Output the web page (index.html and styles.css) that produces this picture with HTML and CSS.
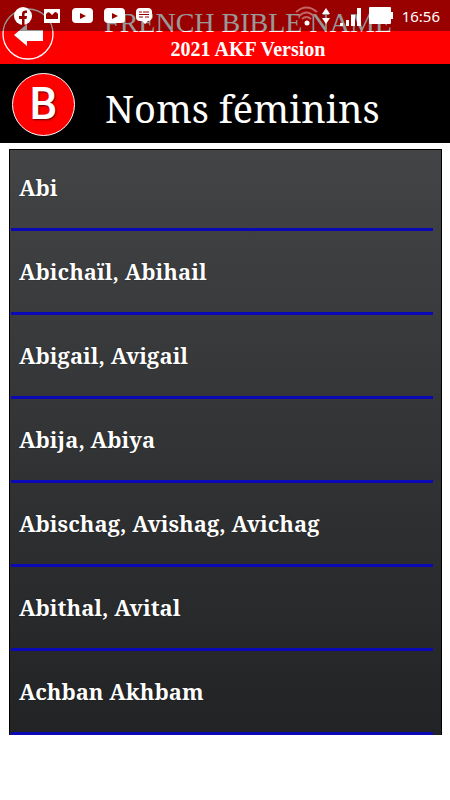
FILE: index.html
```
<!DOCTYPE html>
<html lang="fr">
<head>
<meta charset="utf-8">
<meta name="viewport" content="width=device-width, initial-scale=1">
<title>French Bible Name</title>
<link rel="stylesheet" href="styles.css">
</head>
<body>
<div class="status">
  <div class="status-group notices">
    <svg width="18" height="18" viewBox="0 0 18 18" aria-hidden="true"><circle cx="9" cy="9" r="9" fill="#fff"/><path d="M8 18v-6H5V9h3V7c0-3 2-4 5-3.500v2.500c-2 0-2.500 0-2.500 1.500V9H13l-.5 3h-2v6z" fill="#900"/></svg>
    <svg width="18" height="18" viewBox="0 0 18 18" aria-hidden="true"><path d="M1 2h16v14H1z" fill="#fff"/><path d="M3 12V7q2-3 4-1l2 2 3-3q2 0 3 2v5z" fill="#900"/></svg>
    <svg width="21" height="18" viewBox="0 0 21 18" aria-hidden="true"><rect y="1" width="21" height="15" rx="4" fill="#fff"/><path d="M8 6v6l6-3z" fill="#900"/></svg>
    <svg width="21" height="18" viewBox="0 0 21 18" aria-hidden="true"><rect y="1" width="21" height="15" rx="4" fill="#fff"/><path d="M8 6v6l6-3z" fill="#900"/></svg>
    <svg width="18" height="18" viewBox="0 0 18 18" aria-hidden="true"><path d="M4 1h8c3 0 4 2 4 4v5c0 2-1 4-4 4l-3 3-3-3H4c-3 0-4-2-4-4V5c0-2 1-4 4-4z" fill="#fff"/><path d="M3 5h3M7 5h6M3 7.500h10M3 10h4M9 10h4" stroke="#900" stroke-width="1.200"/></svg>
  </div>
  <div class="status-group signals">
    <svg width="23" height="20" viewBox="0 0 23 20" aria-hidden="true"><g fill="none" stroke="#c66464" stroke-width="2"><path d="M1 6q10.500-9 21 0M4 10q7.500-7 15 0M7 13q4.500-4 9 0"/></g><circle cx="12" cy="17" r="2.500" fill="#fff"/></svg>
    <svg width="8" height="18" viewBox="0 0 8 18" aria-hidden="true"><path d="M4 1l4 6H0zM4 17l4-6H0z" fill="#fff"/></svg>
    <svg class="bars" width="21" height="20" viewBox="0 0 21 20" aria-hidden="true"><path d="M0 17h3v3H0zM6 14h3v6H6zM11 9h4v11h-4zM17 2h4v18h-4z" fill="#fff"/></svg>
    <svg class="battery" width="24" height="18" viewBox="0 0 24 18" aria-hidden="true"><path d="M1 0h20q1 0 1 1v4h2v7h-2v4q0 1-1 1H1q-1 0-1-1V1q0-1 1-1z" fill="#fff"/></svg>
    <span class="clock">16:56</span>
  </div>
</div>
<header class="top">
  <button class="back" type="button" aria-label="Retour">
    <svg width="52" height="52" viewBox="0 0 52 52" aria-hidden="true"><circle cx="26" cy="26" r="25" fill="none" stroke="#fff" stroke-width="1.300"/><path d="M12 27L25 16V22H41V33H25V38z" fill="#fff"/></svg>
  </button>
  <div class="brand">
    <p class="brand-name">FRENCH BIBLE NAME</p>
    <p class="brand-version">2021 AKF Version</p>
  </div>
</header>
<div class="heading">
  <span class="badge">B</span>
  <h1>Noms féminins</h1>
</div>
<main>
  <ul class="names">
    <li><a href="#abi">Abi</a></li>
    <li><a href="#abichail">Abichaïl, Abihail</a></li>
    <li><a href="#abigail">Abigail, Avigail</a></li>
    <li><a href="#abija">Abija, Abiya</a></li>
    <li><a href="#abischag">Abischag, Avishag, Avichag</a></li>
    <li><a href="#abithal">Abithal, Avital</a></li>
    <li><a href="#achban">Achban Akhbam</a></li>
  </ul>
</main>
</body>
</html>
```
FILE: styles.css
```
* { box-sizing: border-box; }
body {
  margin: 0;
  background: #fff;
  color: #fff;
  font-family: "Noto Serif", "Droid Serif", "DejaVu Serif Condensed", "DejaVu Serif", serif;
}
p, h1, ul { margin: 0; padding: 0; }
svg { display: block; flex: none; }

.status {
  position: absolute;
  inset: 0 0 auto 0;
  z-index: 1;
  height: 31px;
  padding: 0 10px 0 14px;
  display: flex;
  justify-content: space-between;
  align-items: center;
  background: rgba(0, 0, 0, 0.4);
}
.status-group { display: flex; align-items: center; }
.notices { gap: 11px; }
.bars { margin-left: 10px; }
.signals svg:nth-child(2) { margin-left: 4px; }
.battery { margin-left: 8px; }
.clock {
  margin-left: 9px;
  font: 15px/30px "Noto Sans", Roboto, sans-serif;
}

.top {
  display: flex;
  height: 64px;
  padding: 8px 8px 0 2px;
  background: #f00;
}
.back {
  flex: none;
  width: 52px;
  height: 52px;
  padding: 0;
  border: 0;
  background: none;
}
.brand {
  flex: 1;
  text-align: center;
  font-family: "Liberation Serif", serif;
  white-space: nowrap;
}
.brand-name { font-size: 28px; line-height: 30px; }
.brand-version { font-size: 20px; font-weight: 700; line-height: 22px; }

.heading {
  display: flex;
  align-items: center;
  gap: 30px;
  height: 79px;
  padding: 2px 12px 0;
  background: #000;
}
.badge {
  flex: none;
  width: 63px;
  height: 63px;
  border: 1px solid #fff;
  border-radius: 50%;
  background: #f00;
  text-align: center;
  font: 500 44px/60px Roboto, sans-serif;
  text-shadow: 1px 1px 2px #600;
}
h1 {
  padding-top: 6px;
  font-size: 38px;
  font-weight: 400;
  line-height: 48px;
}

main { padding: 6px 8px 0 9px; }
.names {
  padding: 0 8px 0 1px;
  border: 1px solid #000;
  border-bottom: 0;
  background: linear-gradient(#434445, #222324);
  list-style: none;
}
.names li { border-bottom: 3px solid #0b08b8; }
.names a {
  display: block;
  padding: 24px 8px;
  color: #fff;
  font-size: 22px;
  font-weight: 700;
  line-height: 33px;
  text-decoration: none;
  text-shadow: 0 0 1px #000;
}
.names li:first-child a { padding-top: 21px; }
```
